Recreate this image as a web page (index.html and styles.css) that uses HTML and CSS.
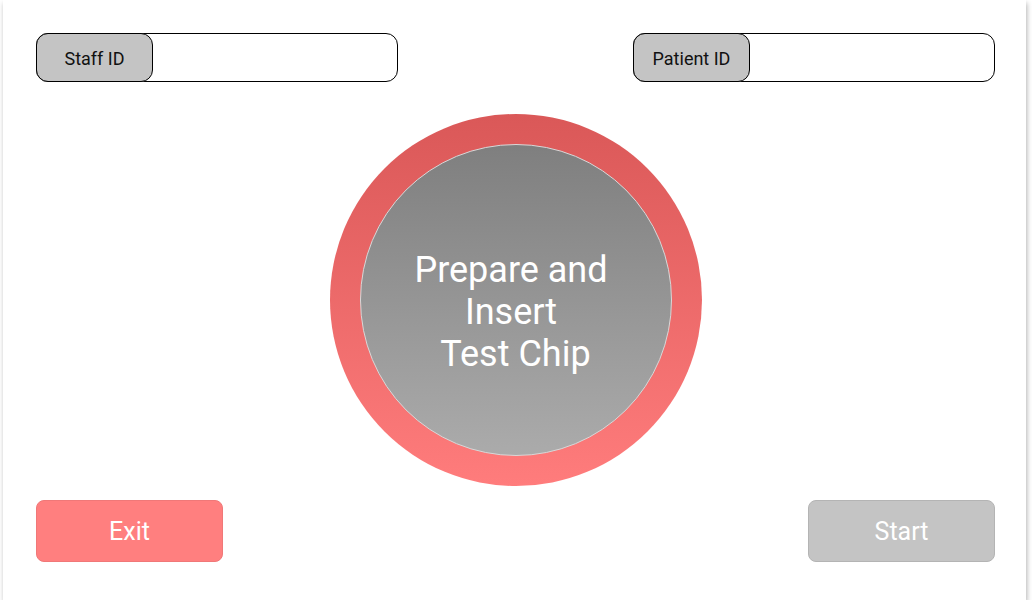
FILE: index.html
```html
<!DOCTYPE html>
<html>
<head>
<meta charset="utf-8">
<link rel="stylesheet" href="styles.css">
</head>
<body>
<div class="card">
  <div class="top-row">
    <div class="field"><div class="field-label">Staff ID</div><div class="field-input"></div></div>
    <div class="field"><div class="field-label">Patient ID</div><div class="field-input"></div></div>
  </div>
  <div class="main">
    <button class="btn btn-exit">Exit</button>
    <div class="ring">
      <div class="disc">Prepare and<br>Insert<br>&nbsp;Test Chip</div>
    </div>
    <button class="btn btn-start">Start</button>
  </div>
</div>
</body>
</html>
```
FILE: styles.css
```css
html, body {
  margin: 0;
  padding: 0;
  background: #ffffff;
  font-family: Roboto, "Liberation Sans", sans-serif;
}
.card {
  box-sizing: border-box;
  margin-left: 3px;
  width: 1023px;
  height: 600px;
  background: #ffffff;
  box-shadow: 1px 3px 5px rgba(0, 0, 0, 0.3);
  padding: 33px 31px 0 33px;
  display: flex;
  flex-direction: column;
}
.top-row {
  display: flex;
  justify-content: space-between;
}
.field {
  box-sizing: border-box;
  width: 362px;
  height: 49px;
  border: 1px solid #000;
  border-radius: 12px;
  display: flex;
}
.field-label {
  box-sizing: border-box;
  width: 117px;
  margin: -1px 0 -1px -1px;
  background: #c4c4c4;
  border: 1px solid #000;
  border-radius: 12px;
  display: flex;
  align-items: center;
  justify-content: center;
  font-size: 18px;
  color: #111;
  padding-top: 2px;
}
.main {
  margin-top: 32px;
  height: 448px;
  display: grid;
  grid-template-columns: 294px 372px 1fr;
}
.ring {
  width: 372px;
  height: 372px;
  border-radius: 50%;
  background: linear-gradient(180deg, #da5858 0%, #ff7c7c 100%);
  display: flex;
  align-items: center;
  justify-content: center;
  align-self: start;
}
.disc {
  box-sizing: border-box;
  width: 312px;
  height: 312px;
  border-radius: 50%;
  border: 1px solid #d8d8d8;
  background: linear-gradient(180deg, #7f7f7f 0%, #ababab 100%);
  color: #ffffff;
  font-size: 36px;
  line-height: 42px;
  text-align: center;
  display: flex;
  align-items: center;
  justify-content: center;
  padding: 24px 10px 0 0;
}
.btn {
  box-sizing: border-box;
  width: 187px;
  height: 62px;
  border-radius: 8px;
  font-family: Roboto, "Liberation Sans", sans-serif;
  font-size: 25px;
  color: #ffffff;
  align-self: end;
  padding: 0;
}
.btn-exit {
  justify-self: start;
  background: #ff7f7f;
  border: 1px solid #f07878;
}
.btn-start {
  justify-self: end;
  background: #c4c4c4;
  border: 1px solid #b4b4b4;
}
```
